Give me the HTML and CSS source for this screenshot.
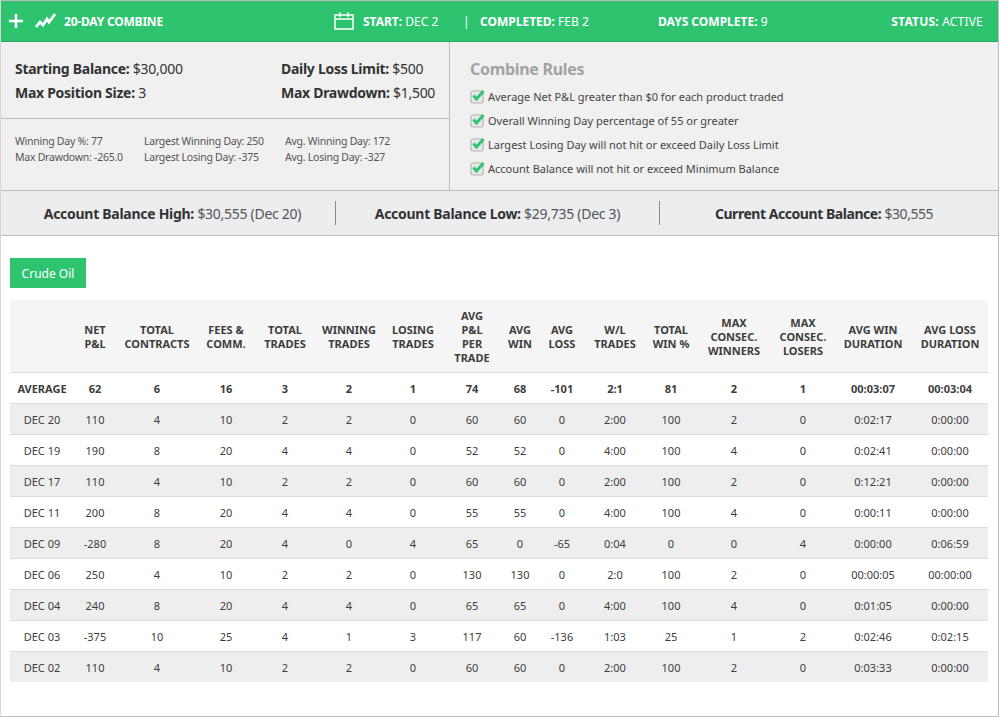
FILE: index.html
```html
<!DOCTYPE html>
<html lang="en">
<head>
    <meta charset="UTF-8">
    <title>20-Day Combine</title>
    <link rel="stylesheet" href="styles.css">
</head>
<body>
    <div class="page">
        <header class="topbar">
            <div class="brand">
                <svg class="icon-plus" width="16" height="16" viewBox="0 0 16 16"><path d="M8 1v14M1 8h14" stroke="#fff" stroke-width="2.600" fill="none"/></svg>
                <svg class="icon-trend" width="21" height="16" viewBox="0 0 21 16"><path d="M1 14l4-5 3 3 4-6 2 3 6-8" stroke="#fff" stroke-width="2.800" fill="none"/></svg>
                <span class="brand-name">20-DAY COMBINE</span>
            </div>
            <div class="top-item top-start">
                <svg class="icon-cal" width="20" height="18" viewBox="0 0 20 18"><path d="M1 3h18v14H1zM1 7h18M6 0.500V5M14 0.500V5" stroke="#fff" stroke-width="1.500" fill="none"/></svg>
                <span><b>START:</b> DEC 2</span>
            </div>
            <div class="top-sep">|</div>
            <div class="top-item"><span><b>COMPLETED:</b> FEB 2</span></div>
            <div class="top-item"><span><b>DAYS COMPLETE:</b> 9</span></div>
            <div class="top-item top-status"><span><b>STATUS:</b> ACTIVE</span></div>
        </header>

        <section class="summary">
            <div class="summary-left">
                <div class="big-stats">
                    <div><b>Starting Balance:</b> $30,000</div>
                    <div><b>Daily Loss Limit:</b> $500</div>
                    <div><b>Max Position Size:</b> 3</div>
                    <div><b>Max Drawdown:</b> $1,500</div>
                </div>
                <div class="small-stats">
                    <div>Winning Day %: 77</div>
                    <div>Largest Winning Day: 250</div>
                    <div>Avg. Winning Day: 172</div>
                    <div>Max Drawdown: -265.0</div>
                    <div>Largest Losing Day: -375</div>
                    <div>Avg. Losing Day: -327</div>
                </div>
            </div>
            <div class="rules">
                <h2>Combine Rules</h2>
                <ul>
                    <li><svg class="check" width="15" height="15" viewBox="0 0 15 15"><rect x="1" y="2" width="12" height="12" rx="2" fill="#e8e8e8" stroke="#b5b5b5" stroke-width="1.200"/><path d="M3.500 6.500l3 3.500L13.500 2" stroke="#2ec46f" stroke-width="3" fill="none"/></svg>Average Net P&amp;L greater than $0 for each product traded</li>
                    <li><svg class="check" width="15" height="15" viewBox="0 0 15 15"><rect x="1" y="2" width="12" height="12" rx="2" fill="#e8e8e8" stroke="#b5b5b5" stroke-width="1.200"/><path d="M3.500 6.500l3 3.500L13.500 2" stroke="#2ec46f" stroke-width="3" fill="none"/></svg>Overall Winning Day percentage of 55 or greater</li>
                    <li><svg class="check" width="15" height="15" viewBox="0 0 15 15"><rect x="1" y="2" width="12" height="12" rx="2" fill="#e8e8e8" stroke="#b5b5b5" stroke-width="1.200"/><path d="M3.500 6.500l3 3.500L13.500 2" stroke="#2ec46f" stroke-width="3" fill="none"/></svg>Largest Losing Day will not hit or exceed Daily Loss Limit</li>
                    <li><svg class="check" width="15" height="15" viewBox="0 0 15 15"><rect x="1" y="2" width="12" height="12" rx="2" fill="#e8e8e8" stroke="#b5b5b5" stroke-width="1.200"/><path d="M3.500 6.500l3 3.500L13.500 2" stroke="#2ec46f" stroke-width="3" fill="none"/></svg>Account Balance will not hit or exceed Minimum Balance</li>
                </ul>
            </div>
        </section>

        <section class="balances">
            <div class="bal bal-high"><b>Account Balance High:</b> $30,555 (Dec 20)</div>
            <div class="bal bal-low"><b>Account Balance Low:</b> $29,735 (Dec 3)</div>
            <div class="bal bal-now"><b>Current Account Balance:</b> $30,555</div>
        </section>

        <main class="content">
            <button class="product-btn">Crude Oil</button>
            <table class="days">
                <colgroup>
                    <col class="w64"><col class="w42"><col class="w82"><col class="w56"><col class="w62"><col class="w66"><col class="w62"><col class="w56">
                    <col class="w40"><col class="w44"><col class="w62"><col class="w50"><col class="w76"><col class="w62"><col class="w78"><col class="w76">
                </colgroup>
                <thead>
                    <tr>
                        <th></th><th>NET<br>P&amp;L</th><th>TOTAL<br>CONTRACTS</th><th>FEES &amp;<br>COMM.</th><th>TOTAL<br>TRADES</th><th>WINNING<br>TRADES</th><th>LOSING<br>TRADES</th><th>AVG<br>P&amp;L<br>PER<br>TRADE</th><th>AVG<br>WIN</th><th>AVG<br>LOSS</th><th>W/L<br>TRADES</th><th>TOTAL<br>WIN %</th><th>MAX<br>CONSEC.<br>WINNERS</th><th>MAX<br>CONSEC.<br>LOSERS</th><th>AVG WIN<br>DURATION</th><th>AVG LOSS<br>DURATION</th>
                    </tr>
                </thead>
                <tbody>
                    <tr class="avg"><td>AVERAGE</td><td>62</td><td>6</td><td>16</td><td>3</td><td>2</td><td>1</td><td>74</td><td>68</td><td>-101</td><td>2:1</td><td>81</td><td>2</td><td>1</td><td>00:03:07</td><td>00:03:04</td></tr>
                    <tr><td>DEC 20</td><td>110</td><td>4</td><td>10</td><td>2</td><td>2</td><td>0</td><td>60</td><td>60</td><td>0</td><td>2:00</td><td>100</td><td>2</td><td>0</td><td>0:02:17</td><td>0:00:00</td></tr>
                    <tr><td>DEC 19</td><td>190</td><td>8</td><td>20</td><td>4</td><td>4</td><td>0</td><td>52</td><td>52</td><td>0</td><td>4:00</td><td>100</td><td>4</td><td>0</td><td>0:02:41</td><td>0:00:00</td></tr>
                    <tr><td>DEC 17</td><td>110</td><td>4</td><td>10</td><td>2</td><td>2</td><td>0</td><td>60</td><td>60</td><td>0</td><td>2:00</td><td>100</td><td>2</td><td>0</td><td>0:12:21</td><td>0:00:00</td></tr>
                    <tr><td>DEC 11</td><td>200</td><td>8</td><td>20</td><td>4</td><td>4</td><td>0</td><td>55</td><td>55</td><td>0</td><td>4:00</td><td>100</td><td>4</td><td>0</td><td>0:00:11</td><td>0:00:00</td></tr>
                    <tr><td>DEC 09</td><td>-280</td><td>8</td><td>20</td><td>4</td><td>0</td><td>4</td><td>65</td><td>0</td><td>-65</td><td>0:04</td><td>0</td><td>0</td><td>4</td><td>0:00:00</td><td>0:06:59</td></tr>
                    <tr><td>DEC 06</td><td>250</td><td>4</td><td>10</td><td>2</td><td>2</td><td>0</td><td>130</td><td>130</td><td>0</td><td>2:0</td><td>100</td><td>2</td><td>0</td><td>00:00:05</td><td>00:00:00</td></tr>
                    <tr><td>DEC 04</td><td>240</td><td>8</td><td>20</td><td>4</td><td>4</td><td>0</td><td>65</td><td>65</td><td>0</td><td>4:00</td><td>100</td><td>4</td><td>0</td><td>0:01:05</td><td>0:00:00</td></tr>
                    <tr><td>DEC 03</td><td>-375</td><td>10</td><td>25</td><td>4</td><td>1</td><td>3</td><td>117</td><td>60</td><td>-136</td><td>1:03</td><td>25</td><td>1</td><td>2</td><td>0:02:46</td><td>0:02:15</td></tr>
                    <tr><td>DEC 02</td><td>110</td><td>4</td><td>10</td><td>2</td><td>2</td><td>0</td><td>60</td><td>60</td><td>0</td><td>2:00</td><td>100</td><td>2</td><td>0</td><td>0:03:33</td><td>0:00:00</td></tr>
                </tbody>
            </table>
        </main>
    </div>
</body>
</html>
```

FILE: styles.css
```css
* {
    box-sizing: border-box;
}
body {
    margin: 0;
    background-color: #fff;
    color: #3a3a3a;
    font-family: "Noto Sans", "Liberation Sans", sans-serif;
    font-size: 12px;
}
.page {
    width: 999px;
    height: 717px;
    border: 1px solid #bdbdbd;
    border-left-color: #d8d8d8;
}
.topbar {
    display: grid;
    grid-template-columns: 333px 129px 17px 178px 1fr auto;
    align-items: center;
    height: 41px;
    padding-right: 15px;
    background-color: #2ec46f;
    border-bottom: 1px solid #25a85d;
    color: #fff;
    font-size: 12px;
}
.brand {
    display: flex;
    align-items: center;
    font-weight: bold;
    letter-spacing: -0.2px;
}
.icon-plus {
    margin-left: 7px;
}
.icon-trend {
    margin-left: 11px;
}
.brand-name {
    margin-left: 8px;
}
.top-item {
    display: flex;
    align-items: center;
}
.icon-cal {
    margin-right: 9px;
}
.top-status {
    letter-spacing: 0.2px;
}
.summary {
    display: flex;
    height: 149px;
    background-color: #f0f0f0;
    border-bottom: 1px solid #bdbdbd;
}
.summary-left {
    width: 449px;
    border-right: 1px solid #bdbdbd;
}
.big-stats {
    display: grid;
    grid-template-columns: 266px 1fr;
    grid-auto-rows: 24px;
    align-items: center;
    height: 77px;
    padding: 14px 0 0 14px;
    border-bottom: 1px solid #bdbdbd;
    font-size: 14px;
    letter-spacing: -0.28px;
    color: #333;
}
.small-stats {
    display: grid;
    grid-template-columns: 129px 141px 1fr;
    grid-auto-rows: 16px;
    align-items: center;
    padding: 14px 0 0 14px;
    font-size: 10.5px;
    letter-spacing: -0.25px;
    color: #555;
}
.rules {
    flex: 1;
    padding: 16px 0 0 20px;
}
.rules h2 {
    margin: 0 0 4px;
    font-size: 16px;
    line-height: 22px;
    letter-spacing: -0.3px;
    color: #a3a3a3;
}
.rules ul {
    margin: 0;
    padding: 0;
    list-style: none;
}
.rules li {
    display: flex;
    align-items: center;
    height: 24px;
    font-size: 11px;
    color: #444;
}
.check {
    margin-right: 3px;
}
.balances {
    display: flex;
    align-items: center;
    height: 45px;
    background-color: #ecedef;
    border-bottom: 1px solid #bdbdbd;
    font-size: 14px;
    letter-spacing: -0.28px;
    color: #555;
}
.balances b {
    color: #333;
}
.bal {
    height: 24px;
    line-height: 25px;
    text-align: center;
}
.bal-high {
    width: 334px;
    padding-left: 9px;
}
.bal-low {
    width: 325px;
    border-left: 1px solid #8a8a8a;
    border-right: 1px solid #8a8a8a;
}
.bal-now {
    flex: 1;
    padding-right: 10px;
    letter-spacing: -0.45px;
}
.content {
    padding: 22px 0 0 9px;
}
.product-btn {
    display: block;
    width: 76px;
    height: 30px;
    padding: 0;
    border: none;
    background-color: #2ec46f;
    color: #fff;
    font-family: inherit;
    font-size: 12px;
}
.days {
    width: 978px;
    margin-top: 12px;
    border-collapse: collapse;
    table-layout: fixed;
    color: #3d3d3d;
    font-size: 11px;
}
.w40 { width: 40px; }
.w42 { width: 42px; }
.w44 { width: 44px; }
.w50 { width: 50px; }
.w56 { width: 56px; }
.w62 { width: 62px; }
.w64 { width: 64px; }
.w66 { width: 66px; }
.w76 { width: 76px; }
.w78 { width: 78px; }
.w82 { width: 82px; }
.days th {
    height: 72px;
    padding: 2px 0 0;
    background-color: #f5f5f5;
    font-size: 11px;
    line-height: 14px;
    white-space: nowrap;
}
.days td {
    height: 31px;
    padding: 2px 0 0;
    border-top: 1px solid #dcdcdc;
    text-align: center;
    white-space: nowrap;
}
.days tbody tr:nth-child(even) {
    background-color: #eee;
}
.avg td {
    font-weight: bold;
}
```
